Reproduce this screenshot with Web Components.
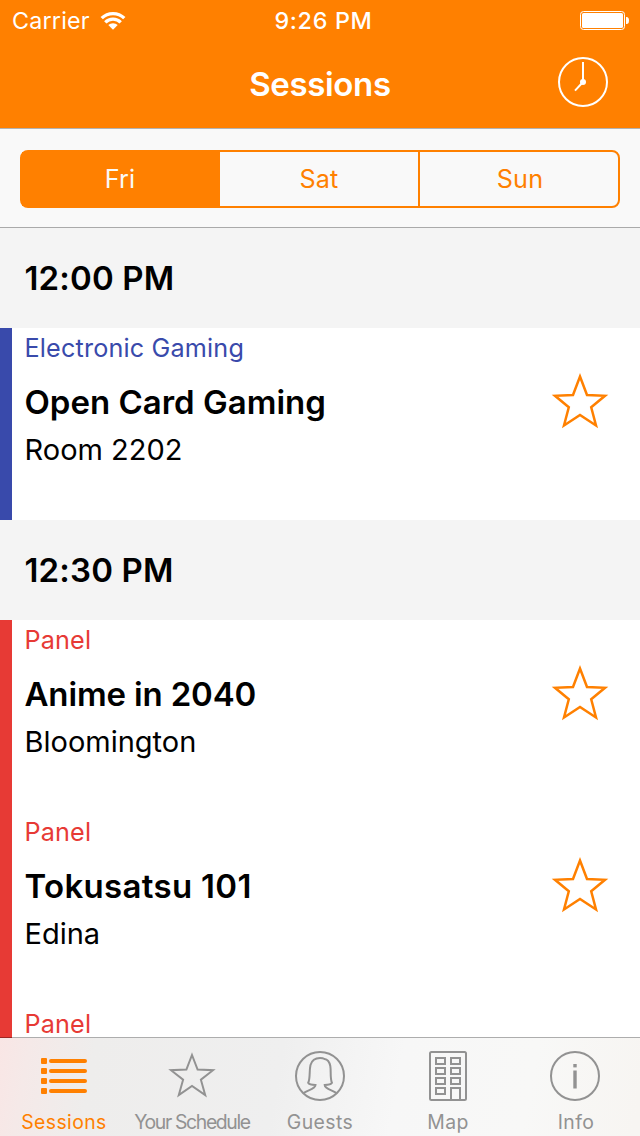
<!DOCTYPE html>
<html lang="en">
<head>
<meta charset="utf-8">
<title>Sessions</title>
<style>
  html, body { margin: 0; height: 1136px; overflow: hidden; background: #fff; }
  body { font-family: Inter, "Liberation Sans", sans-serif; color: #000; --tint: #ff8000; }
</style>
</head>
<body>
<session-app></session-app>
<script>
const define = (name, html) => {
  const template = document.createElement('template');
  template.innerHTML = html;
  customElements.define(name, class extends HTMLElement {
    constructor() {
      super();
      this.attachShadow({ mode: 'open' }).append(template.content.cloneNode(true));
    }
  });
};

define('status-bar', `
<style>
  :host { display: grid; grid-template-columns: 1fr auto 1fr; align-items: center; height: 41px; color: #fff; font-size: 23.3px; line-height: 41px; }
  .left { display: flex; align-items: center; padding-left: 12px; gap: 10px; letter-spacing: .2px; }
  .time { font-weight: 500; letter-spacing: .7px; padding-left: 7px; }
  .right { display: flex; justify-content: flex-end; padding-right: 11px; }
  svg { display: block; }
</style>
<div class="left"><span>Carrier</span>
  <svg width="26" height="20" viewBox="0 0 26 20"><g fill="none" stroke="#fff" stroke-width="3.3"><path d="M1.7 7.2A16 16 0 0 1 24.3 7.2"/><path d="M5.3 11.3A10.8 10.8 0 0 1 20.7 11.3"/></g><path d="M8.3 14.1A6.7 6.7 0 0 1 17.7 14.1L13 18.8Z" fill="#fff"/></svg>
</div>
<div class="time">9:26 PM</div>
<div class="right"><svg width="49" height="19" viewBox="0 0 49 19"><rect x=".5" y=".5" width="44" height="18" rx="3" fill="none" stroke="#fff"/><rect x="2" y="2" width="41" height="15" rx="1.6" fill="#fff"/><path d="M46 6h.5a2.500 3.500 0 0 1 0 7H46Z" fill="#fff"/></svg></div>`);

define('nav-bar', `
<style>
  :host { display: grid; grid-template-columns: 1fr auto 1fr; height: 88px; color: #fff; border-bottom: 1px solid #b2b2b2; box-sizing: border-box; }
  h1 { margin: 0; font-size: 33px; font-weight: 600; line-height: 86px; letter-spacing: -.35px; }
  svg { justify-self: end; margin: 15px 31px 0 0; display: block; }
</style>
<span></span><h1><slot></slot></h1>
<svg width="52" height="52" viewBox="0 0 52 52" fill="none" stroke="#fff" stroke-width="2"><circle cx="26" cy="26" r="24"/><path d="M26 6v20l-8 8.600" stroke-linecap="butt"/><circle cx="26" cy="26" r="3" fill="#fff" stroke="none"/></svg>`);

define('day-picker', `
<style>
  :host { display: block; box-sizing: border-box; height: 99px; padding: 21px 20px 19px; background: #f9f9f9; border-bottom: 1px solid #aaa; }
  div { box-sizing: border-box; height: 58px; border: 2px solid var(--tint); border-radius: 8px; display: grid; grid-template-columns: 198px 198px 1fr; background: #f9f9f9; color: var(--tint); font-size: 25.2px; line-height: 54px; text-align: center; letter-spacing: .15px; }
  span + span + span { border-left: 2px solid var(--tint); padding-left: 2px; }
  .on { background: var(--tint); color: #f9f9f9; text-indent: -2px; }
</style>
<div><span class="on">Fri</span><span>Sat</span><span>Sun</span></div>`);

define('time-header', `
<style>
  :host { display: block; height: 100px; background: #f4f4f4; padding-left: 24.5px; font-size: 33px; font-weight: 600; line-height: 100px; letter-spacing: .15px; }
</style><slot></slot>`);

define('session-row', `
<style>
  :host { display: flex; box-sizing: border-box; height: 192px; border-left: 12px solid var(--track); background: #fff; padding-left: 12.500px; white-space: nowrap; }
  .text { flex: 1; }
  .track { color: var(--track); font-size: 25.2px; line-height: 40px; letter-spacing: .17px; }
  .name { font-size: 33px; font-weight: 600; line-height: 50px; padding-top: 9px; letter-spacing: var(--name-spacing, 0); }
  .room { font-size: 29px; line-height: 46px; letter-spacing: 0; }
  svg { display: block; margin: 44px 30px 0 0; }
</style>
<div class="text"><div class="track"><slot name="track"></slot></div><div class="name"><slot></slot></div><div class="room"><slot name="room"></slot></div></div>
<svg width="60" height="60" viewBox="0 0 60 60"><path d="M30 4.5L37 23L55 23.8L41.200 35.2L46 53.500L30 43L14 53.500L18.800 35.2L5 23.800L23 23Z" fill="none" stroke="#ff8000" stroke-width="2.5"/></svg>`);

define('tab-item', `
<style>
  :host { display: flex; flex-direction: column; align-items: center; color: #929292; font-size: 19.4px; line-height: 26px; white-space: nowrap; letter-spacing: .4px; }
  :host([active]) { color: var(--tint); }
  .icon { height: 71px; } .icon ::slotted(svg) { display: block; }
</style>
<div class="icon"><slot name="icon"></slot></div><span><slot></slot></span>`);

define('tab-bar', `
<style>
  :host { position: absolute; left: 0; bottom: 0; width: 640px; height: 99px; box-sizing: border-box; border-top: 1px solid rgba(0, 0, 0, .32); display: grid; grid-template-columns: repeat(5, 128px); background: linear-gradient(100deg, #f9e6e5 0, #f5e9e8 30px, #eeedec 95px, #efefef 280px, #f7f7f7 400px, #f8f8f7 530px, #f7f5f2 640px) padding-box; }
  svg { fill: none; stroke: currentColor; stroke-width: 2; }
  .tight { letter-spacing: -1.350px; }
</style>
<tab-item active><svg slot="icon" width="60" height="71" viewBox="0 0 60 71"><g fill="currentColor" stroke="none"><rect x="7" y="20" width="6" height="6" rx="1"/><rect x="15" y="21" width="38" height="4" rx="2"/><rect x="7" y="30" width="6" height="6" rx="1"/><rect x="15" y="31" width="38" height="4" rx="2"/><rect x="7" y="40" width="6" height="6" rx="1"/><rect x="15" y="41" width="38" height="4" rx="2"/><rect x="7" y="50" width="6" height="6" rx="1"/><rect x="15" y="51" width="38" height="4" rx="2"/></g></svg>Sessions</tab-item>
<tab-item class="tight"><svg slot="icon" width="60" height="71" viewBox="0 0 60 71"><path d="M30 17L35.600 31.500L51 32.200L38.900 41.700L43.200 57L30 47.900L16.800 57L21.100 41.700L9 32.200L24.400 31.500Z"/></svg>Your Schedule</tab-item>
<tab-item><svg slot="icon" width="60" height="71" viewBox="0 0 60 71"><circle cx="30" cy="38" r="24"/><path d="M13.500 55C18 52 25.500 51 25.500 47C22.500 47 19 46.500 18.200 44.800C20.500 40 19 33 20.500 27C21.800 22.500 25 20 30 20C32 20 33 20 34.500 21C38 21.400 39.500 24 40.300 28C41.300 34 39.800 40 42 44.800C41 46.500 37.500 47 34.700 47C34.700 51 42 52 46.500 55"/></svg>Guests</tab-item>
<tab-item><svg slot="icon" width="60" height="71" viewBox="0 0 60 71"><rect x="12" y="14" width="36" height="48" rx="1.500"/><path d="M18 20h9v6h-9zM33 20h9v6h-9zM18 30h9v6h-9zM33 30h9v6h-9zM18 40h9v6h-9zM33 40h9v6h-9zM18 50h9v6h-9zM33 62V50h9v12"/></svg>Map</tab-item>
<tab-item><svg slot="icon" width="60" height="71" viewBox="0 0 60 71"><circle cx="29" cy="38" r="24"/><g fill="currentColor" stroke="none"><rect x="27.300" y="26" width="3.400" height="3.400"/><rect x="27.300" y="32.500" width="3.400" height="18"/></g></svg>Info</tab-item>`);

define('session-app', `
<style>
  :host { display: block; position: relative; width: 640px; height: 1136px; overflow: hidden; background: #fff; }
  header { background: var(--tint); }
  .gaming { --track: #394aab; } .panel { --track: #e73a35; }
  .snug { --name-spacing: -.15px; } .loose { --name-spacing: .32px; }
</style>
<header><status-bar></status-bar><nav-bar>Sessions</nav-bar></header>
<day-picker></day-picker>
<main>
  <time-header>12:00 PM</time-header>
  <session-row class="gaming"><span slot="track">Electronic Gaming</span>Open Card Gaming<span slot="room">Room 2202</span></session-row>
  <time-header>12:30 PM</time-header>
  <session-row class="panel snug"><span slot="track">Panel</span>Anime in 2040<span slot="room">Bloomington</span></session-row>
  <session-row class="panel loose"><span slot="track">Panel</span>Tokusatsu 101<span slot="room">Edina</span></session-row>
  <session-row class="panel"><span slot="track">Panel</span></session-row>
</main>
<tab-bar></tab-bar>`);
</script>
</body>
</html>
